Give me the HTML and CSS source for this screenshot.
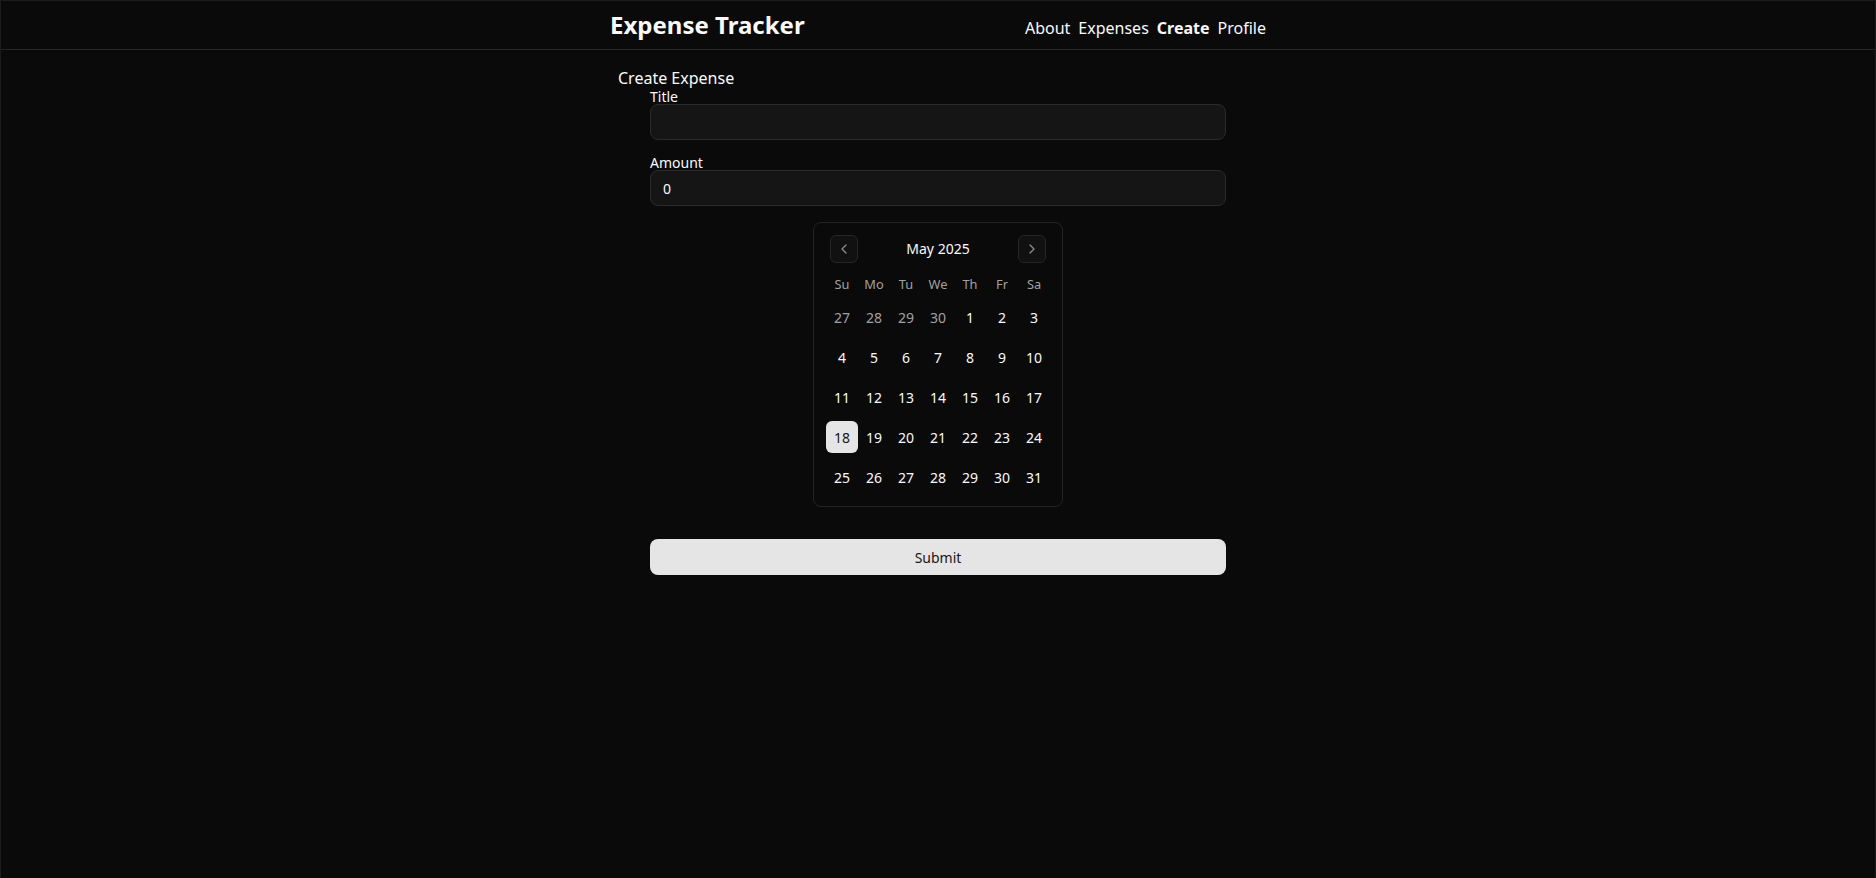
FILE: index.html
```html
<!DOCTYPE html>
<html lang="en">
<head>
<meta charset="utf-8">
<title>Expense Tracker</title>
<link rel="stylesheet" href="styles.css">
</head>
<body>
<div class="app">
  <header class="topbar">
    <div class="topbar-inner">
      <h1 class="brand">Expense Tracker</h1>
      <nav class="nav">
        <a class="nav-link" href="#">About</a>
        <a class="nav-link" href="#">Expenses</a>
        <a class="nav-link active" href="#">Create</a>
        <a class="nav-link" href="#">Profile</a>
      </nav>
    </div>
  </header>
  <main class="main">
    <h2 class="page-title">Create Expense</h2>
    <form class="form">
      <div class="field">
        <label class="label" for="title">Title</label>
        <input class="input" id="title" type="text">
      </div>
      <div class="field">
        <label class="label" for="amount">Amount</label>
        <input class="input" id="amount" type="text" value="0">
      </div>
      <div class="calendar">
        <div class="cal-caption">
          <button type="button" class="cal-nav" aria-label="Previous month">
            <svg width="16" height="16" viewBox="0 0 24 24" fill="none" stroke="currentColor" stroke-width="2" stroke-linecap="round" stroke-linejoin="round"><path d="m15 18-6-6 6-6"/></svg>
          </button>
          <span class="cal-label">May 2025</span>
          <button type="button" class="cal-nav" aria-label="Next month">
            <svg width="16" height="16" viewBox="0 0 24 24" fill="none" stroke="currentColor" stroke-width="2" stroke-linecap="round" stroke-linejoin="round"><path d="m9 18 6-6-6-6"/></svg>
          </button>
        </div>
        <div class="cal-weekdays">
          <span>Su</span><span>Mo</span><span>Tu</span><span>We</span><span>Th</span><span>Fr</span><span>Sa</span>
        </div>
        <div class="cal-days">
          <span class="day outside">27</span><span class="day outside">28</span><span class="day outside">29</span><span class="day outside">30</span><span class="day">1</span><span class="day">2</span><span class="day">3</span>
          <span class="day">4</span><span class="day">5</span><span class="day">6</span><span class="day">7</span><span class="day">8</span><span class="day">9</span><span class="day">10</span>
          <span class="day">11</span><span class="day">12</span><span class="day">13</span><span class="day">14</span><span class="day">15</span><span class="day">16</span><span class="day">17</span>
          <span class="day selected">18</span><span class="day">19</span><span class="day">20</span><span class="day">21</span><span class="day">22</span><span class="day">23</span><span class="day">24</span>
          <span class="day">25</span><span class="day">26</span><span class="day">27</span><span class="day">28</span><span class="day">29</span><span class="day">30</span><span class="day">31</span>
        </div>
      </div>
      <button type="button" class="submit">Submit</button>
    </form>
  </main>
</div>
</body>
</html>
```
FILE: styles.css
```css
* {
  box-sizing: border-box;
}

html {
  background: #0a0a0a;
}

body {
  margin: 0;
  font-family: "Noto Sans", "Open Sans", sans-serif;
  color: #fafafa;
  background: #0a0a0a;
}

.app {
  min-height: 878px;
  border: 1px solid #1c1c1c;
  border-bottom: none;
}

.topbar {
  border-bottom: 1px solid #262626;
}

.topbar-inner {
  max-width: 672px;
  margin: 0 auto;
  padding: 8px;
  display: flex;
  justify-content: space-between;
  align-items: baseline;
}

.brand {
  margin: 0;
  font-size: 24px;
  line-height: 32px;
  font-weight: 700;
}

.nav {
  display: flex;
  gap: 8px;
  align-items: baseline;
}

.nav-link {
  color: #fafafa;
  text-decoration: none;
  font-size: 16px;
  line-height: 24px;
}

.nav-link.active {
  font-weight: 700;
}

.main {
  max-width: 672px;
  margin: 0 auto;
  padding: 16px;
}

.page-title {
  margin: 0;
  font-size: 16px;
  line-height: 24px;
  font-weight: 400;
}

.form {
  max-width: 576px;
  margin: 0 auto;
  display: flex;
  flex-direction: column;
  gap: 16px;
}

.field {
  display: flex;
  flex-direction: column;
}

.label {
  font-size: 14px;
  line-height: 1;
  font-weight: 400;
}

.input {
  height: 36px;
  width: 100%;
  padding: 0 12px;
  border: 1px solid #2b2b2b;
  border-radius: 8px;
  background: #151515;
  color: #fafafa;
  font-family: inherit;
  font-size: 14px;
  outline: none;
}

.calendar {
  align-self: center;
  border: 1px solid #232323;
  border-radius: 8px;
  padding: 12px 12px 13px;
}

.cal-caption {
  height: 28px;
  display: flex;
  align-items: center;
  justify-content: space-between;
  padding: 0 4px;
}

.cal-nav {
  width: 28px;
  height: 28px;
  padding: 0;
  display: flex;
  align-items: center;
  justify-content: center;
  border: 1px solid #262626;
  border-radius: 6px;
  background: #111111;
  color: #8a8a8a;
}

.cal-label {
  font-size: 14px;
  font-weight: 400;
  line-height: 20px;
}

.cal-weekdays {
  margin-top: 11px;
  display: grid;
  grid-template-columns: repeat(7, 32px);
  height: 19px;
  align-items: center;
  text-align: center;
  font-size: 12.8px;
  color: #a1a1a1;
}

.cal-days {
  display: grid;
  grid-template-columns: repeat(7, 32px);
  grid-auto-rows: 32px;
  row-gap: 8px;
  margin-top: 8px;
}

.day {
  display: flex;
  align-items: center;
  justify-content: center;
  font-size: 14px;
  border-radius: 6px;
}

.day.outside {
  color: #a1a1a1;
}

.day.selected {
  background: #e5e5e5;
  color: #171717;
}

.submit {
  margin-top: 16px;
  height: 36px;
  width: 100%;
  border: none;
  border-radius: 8px;
  background: #e5e5e5;
  color: #171717;
  font-family: inherit;
  font-size: 14px;
  font-weight: 400;
}
```
